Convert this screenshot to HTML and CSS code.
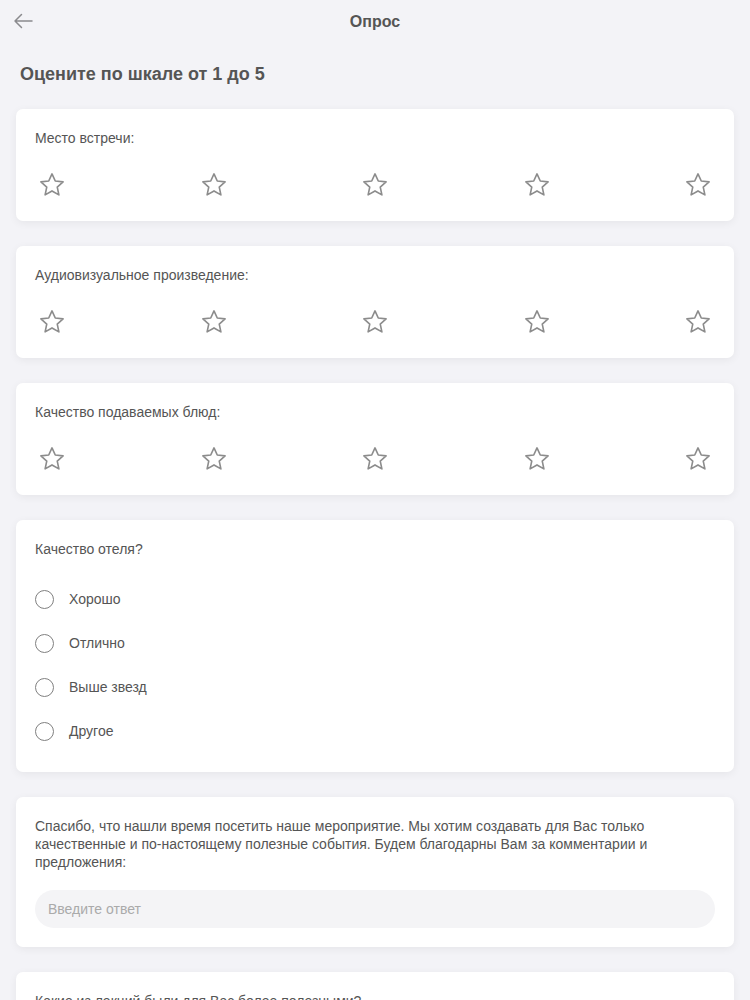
FILE: index.html
```html
<!DOCTYPE html>
<html lang="ru">
<head>
    <meta charset="UTF-8">
    <meta name="viewport" content="width=device-width, initial-scale=1.0">
    <title>Опрос</title>
    <link rel="stylesheet" href="styles.css">
</head>
<body>
    <header class="topbar">
        <a class="back" href="#">
            <svg width="20" height="16" viewBox="0 0 20 16"><path d="M19 8H2M8.5 1.5L2 8l6.5 6.5" fill="none" stroke="#8a8a8e" stroke-width="1.5" stroke-linecap="round" stroke-linejoin="round"/></svg>
        </a>
        <div class="title">Опрос</div>
    </header>

    <main class="page">
        <h1>Оцените по шкале от 1 до 5</h1>

        <section class="card">
            <div class="question">Место встречи:</div>
            <div class="stars">
                <span class="star"><svg viewBox="0 0 24 24"><polygon points="12,2.5 14.8,8.6 21.5,9.3 16.5,13.8 17.9,20.5 12,17.1 6.1,20.5 7.5,13.8 2.5,9.3 9.2,8.6"/></svg></span>
                <span class="star"><svg viewBox="0 0 24 24"><polygon points="12,2.5 14.8,8.6 21.5,9.3 16.5,13.8 17.9,20.5 12,17.1 6.1,20.5 7.5,13.8 2.5,9.3 9.2,8.6"/></svg></span>
                <span class="star"><svg viewBox="0 0 24 24"><polygon points="12,2.5 14.8,8.6 21.5,9.3 16.5,13.8 17.9,20.5 12,17.1 6.1,20.5 7.5,13.8 2.5,9.3 9.2,8.6"/></svg></span>
                <span class="star"><svg viewBox="0 0 24 24"><polygon points="12,2.5 14.8,8.6 21.5,9.3 16.5,13.8 17.9,20.5 12,17.1 6.1,20.5 7.5,13.8 2.5,9.3 9.2,8.6"/></svg></span>
                <span class="star"><svg viewBox="0 0 24 24"><polygon points="12,2.5 14.8,8.6 21.5,9.3 16.5,13.8 17.9,20.5 12,17.1 6.1,20.5 7.5,13.8 2.5,9.3 9.2,8.6"/></svg></span>
            </div>
        </section>

        <section class="card">
            <div class="question">Аудиовизуальное произведение:</div>
            <div class="stars">
                <span class="star"><svg viewBox="0 0 24 24"><polygon points="12,2.5 14.8,8.6 21.5,9.3 16.5,13.8 17.9,20.5 12,17.1 6.1,20.5 7.5,13.8 2.5,9.3 9.2,8.6"/></svg></span>
                <span class="star"><svg viewBox="0 0 24 24"><polygon points="12,2.5 14.8,8.6 21.5,9.3 16.5,13.8 17.9,20.5 12,17.1 6.1,20.5 7.5,13.8 2.5,9.3 9.2,8.6"/></svg></span>
                <span class="star"><svg viewBox="0 0 24 24"><polygon points="12,2.5 14.8,8.6 21.5,9.3 16.5,13.8 17.9,20.5 12,17.1 6.1,20.5 7.5,13.8 2.5,9.3 9.2,8.6"/></svg></span>
                <span class="star"><svg viewBox="0 0 24 24"><polygon points="12,2.5 14.8,8.6 21.5,9.3 16.5,13.8 17.9,20.5 12,17.1 6.1,20.5 7.5,13.8 2.5,9.3 9.2,8.6"/></svg></span>
                <span class="star"><svg viewBox="0 0 24 24"><polygon points="12,2.5 14.8,8.6 21.5,9.3 16.5,13.8 17.9,20.5 12,17.1 6.1,20.5 7.5,13.8 2.5,9.3 9.2,8.6"/></svg></span>
            </div>
        </section>

        <section class="card">
            <div class="question">Качество подаваемых блюд:</div>
            <div class="stars">
                <span class="star"><svg viewBox="0 0 24 24"><polygon points="12,2.5 14.8,8.6 21.5,9.3 16.5,13.8 17.9,20.5 12,17.1 6.1,20.5 7.5,13.8 2.5,9.3 9.2,8.6"/></svg></span>
                <span class="star"><svg viewBox="0 0 24 24"><polygon points="12,2.5 14.8,8.6 21.5,9.3 16.5,13.8 17.9,20.5 12,17.1 6.1,20.5 7.5,13.8 2.5,9.3 9.2,8.6"/></svg></span>
                <span class="star"><svg viewBox="0 0 24 24"><polygon points="12,2.5 14.8,8.6 21.5,9.3 16.5,13.8 17.9,20.5 12,17.1 6.1,20.5 7.5,13.8 2.5,9.3 9.2,8.6"/></svg></span>
                <span class="star"><svg viewBox="0 0 24 24"><polygon points="12,2.5 14.8,8.6 21.5,9.3 16.5,13.8 17.9,20.5 12,17.1 6.1,20.5 7.5,13.8 2.5,9.3 9.2,8.6"/></svg></span>
                <span class="star"><svg viewBox="0 0 24 24"><polygon points="12,2.5 14.8,8.6 21.5,9.3 16.5,13.8 17.9,20.5 12,17.1 6.1,20.5 7.5,13.8 2.5,9.3 9.2,8.6"/></svg></span>
            </div>
        </section>

        <section class="card">
            <div class="question">Качество отеля?</div>
            <div class="options">
                <label class="option"><span class="radio"></span>Хорошо</label>
                <label class="option"><span class="radio"></span>Отлично</label>
                <label class="option"><span class="radio"></span>Выше звезд</label>
                <label class="option"><span class="radio"></span>Другое</label>
            </div>
        </section>

        <section class="card">
            <div class="question">Спасибо, что нашли время посетить наше мероприятие. Мы хотим создавать для Вас только качественные и по-настоящему полезные события. Будем благодарны Вам за комментарии и предложения:</div>
            <input class="answer" type="text" placeholder="Введите ответ">
        </section>

        <section class="card">
            <div class="question">Какие из лекций были для Вас более полезными?</div>
        </section>
    </main>
</body>
</html>
```

FILE: styles.css
```css
body { margin: 0; background-color: #f3f3f7; color: #555; font-family: 'Liberation Sans', Arial, sans-serif; }

.topbar { position: relative; height: 44px; display: flex; align-items: center; justify-content: center; }
.back { position: absolute; left: 13px; top: 13px; display: block; line-height: 0; }
.title { font-size: 16px; font-weight: bold; color: #555; }

.page { padding: 0 16px; }
h1 { margin: 20px 0 25px 4px; font-size: 18px; line-height: 20px; font-weight: bold; color: #555; }

.card {
    background-color: #fff;
    border-radius: 7px;
    box-shadow: 0 2px 8px rgba(0,0,0,0.06);
    padding: 20px 19px 19px;
    margin-bottom: 25px;
}
.question { font-size: 14px; line-height: 18px; color: #555; }

.stars { display: flex; justify-content: space-between; margin-top: 21px; }
.star { width: 34px; height: 34px; display: flex; align-items: center; justify-content: center; }
.star svg { width: 28px; height: 28px; fill: none; stroke: #8c8c8c; stroke-width: 1.4; stroke-linejoin: round; }

.options { margin-top: 19px; }
.option { display: flex; align-items: center; height: 44px; font-size: 14px; color: #555; }
.radio { width: 17px; height: 17px; border: 1.5px solid #808080; border-radius: 50%; margin-right: 15px; }

.answer {
    display: block;
    width: 100%;
    box-sizing: border-box;
    margin-top: 19px;
    height: 38px;
    border: none;
    border-radius: 19px;
    background-color: #f4f4f6;
    padding: 0 13px;
    font-family: inherit;
    font-size: 14px;
    color: #555;
    outline: none;
}
.answer::placeholder { color: #aaa; }
```
